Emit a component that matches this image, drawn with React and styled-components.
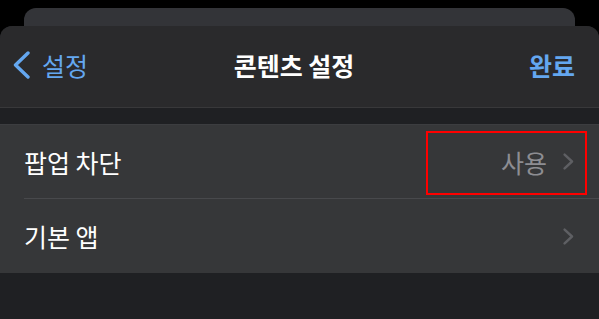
import React from 'react';
import styled, { createGlobalStyle } from 'styled-components';

const Global = createGlobalStyle`
  html, body {
    margin: 0;
    padding: 0;
    background: #000;
  }
  body {
    font-family: "Noto Sans CJK KR", "Noto Sans", sans-serif;
    -webkit-font-smoothing: antialiased;
  }
`;

const Screen = styled.div`
  width: 599px;
  height: 319px;
  overflow: hidden;
  background: #000;
  padding-top: 8px;
  box-sizing: border-box;
`;

const BackCard = styled.div`
  margin: 0 24px;
  height: 18px;
  background: #333438;
  border-radius: 12px 12px 0 0;
`;

const Sheet = styled.div`
  background: #1f2023;
  border-radius: 12px 12px 0 0;
  height: 293px;
  overflow: hidden;
`;

const NavBar = styled.div`
  height: 82px;
  background: #2a2a2c;
  border-bottom: 1px solid #38383a;
  display: grid;
  grid-template-columns: 1fr auto 1fr;
  align-items: center;
  padding: 0 24px 4px 13px;
  box-sizing: border-box;
`;

const BackButton = styled.div`
  display: flex;
  align-items: center;
  gap: 12px;
  color: #64a7f0;
  font-size: 25px;
`;

const Title = styled.div`
  color: #fff;
  font-size: 25px;
  font-weight: 700;
`;

const Done = styled.div`
  justify-self: end;
  color: #64a7f0;
  font-size: 25px;
  font-weight: 700;
`;

const Group = styled.div`
  margin-top: 16px;
  background: #363739;
  border-top: 1px solid #3c3d40;
`;

const Row = styled.div`
  height: 74px;
  display: flex;
  align-items: center;
  margin-left: 24px;
  padding-right: 25px;
  border-bottom: ${(p) => (p.last ? 'none' : '1px solid #48494c')};
  box-sizing: border-box;
  position: relative;
`;

const Label = styled.div`
  flex: 1;
  color: #fff;
  font-size: 25px;
`;

const Value = styled.div`
  color: #8d8d92;
  font-size: 25px;
  margin-right: 16px;
`;

const Highlight = styled.div`
  position: absolute;
  left: 402px;
  top: 6px;
  width: 161px;
  height: 64px;
  border: 2px solid #f00;
  box-sizing: border-box;
`;

const Chevron = () => (
  <svg width="11" height="17" viewBox="0 0 11 17" fill="none">
    <path d="M1.6 1.6 L9 8.5 L1.6 15.4" stroke="#5e5f63" strokeWidth="2.4" strokeLinecap="round" strokeLinejoin="round" />
  </svg>
);

const BackChevron = () => (
  <svg width="17" height="28" viewBox="0 0 17 28" fill="none">
    <path d="M15 2 L2.5 14 L15 26" stroke="#64a7f0" strokeWidth="3.4" strokeLinecap="round" strokeLinejoin="round" />
  </svg>
);

export default function App() {
  return (
    <Screen>
      <Global />
      <BackCard />
      <Sheet>
        <NavBar>
          <BackButton>
            <BackChevron />
            설정
          </BackButton>
          <Title>콘텐츠 설정</Title>
          <Done>완료</Done>
        </NavBar>
        <Group>
          <Row>
            <Label>팝업 차단</Label>
            <Value>사용</Value>
            <Chevron />
            <Highlight />
          </Row>
          <Row last>
            <Label>기본 앱</Label>
            <Chevron />
          </Row>
        </Group>
      </Sheet>
    </Screen>
  );
}
